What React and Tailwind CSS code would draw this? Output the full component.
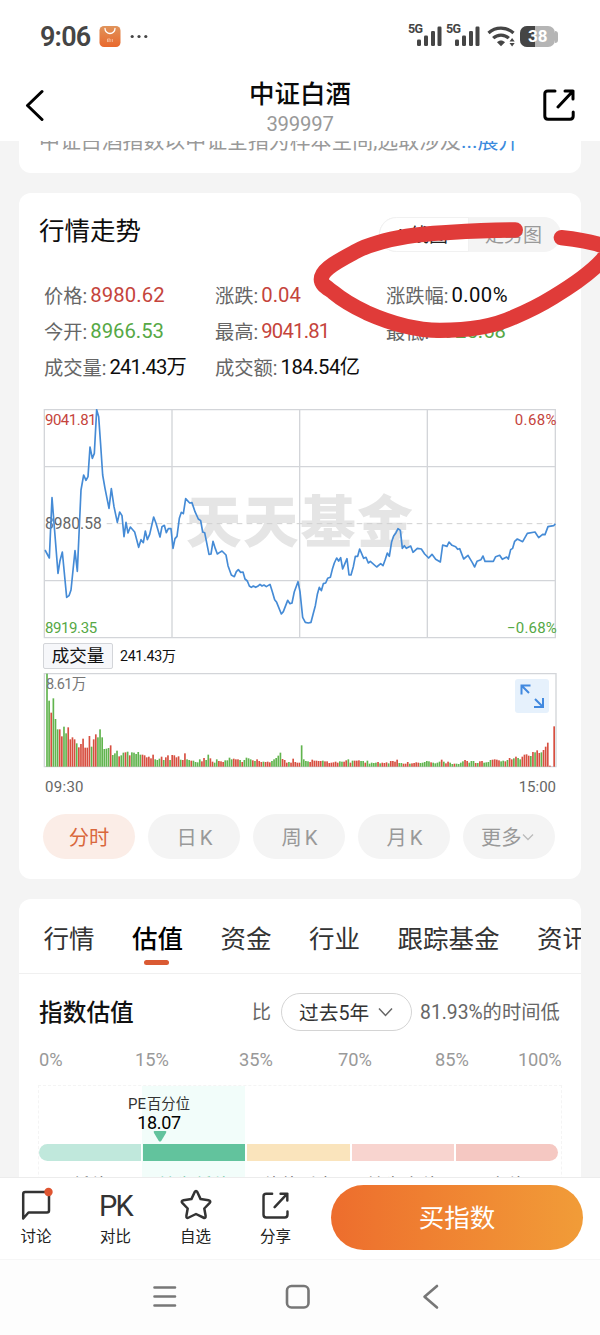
import React from 'react';

const VOLUME =
  'g279 g198 r162 g205 g143 g112 r112 r91 g120 g100 r118 r82 r88 r82 g70 r58 r68 r84 r57 r57 r92 g60 r82 r97 g88 g112 g88 g53 g54 g56 r64 g35 g40 g48 r31 g34 g42 r43 g45 r34 g43 g42 g38 g44 g36 r36 r34 r28 r30 r25 r36 g22 g20 g24 r30 g20 r28 r34 g20 r35 r34 r28 r31 g21 r20 r40 g22 g20 r18 g18 g14 g13 g22 r16 r26 g20 g36 r25 r15 g12 g22 r17 r16 r14 g19 g19 g27 g22 r24 r22 r22 g20 r14 g20 g27 g25 g22 r19 g17 r22 r17 r14 g15 r14 r15 r13 g17 g22 g26 g33 g42 r23 r20 r12 g14 r12 r24 r14 r12 r12 g64 g22 g17 g16 r14 r21 r18 r18 r17 r17 g18 r16 r16 r11 r12 r13 r15 r12 g16 g15 r15 r19 g22 r12 g18 r18 r18 r19 g17 g17 r12 g18 g9 g12 g11 g12 r14 g10 r12 r11 r13 g10 r17 r17 r15 r21 g11 g11 r9 r9 r14 g9 r10 r11 r13 r12 g11 g12 g14 g17 g16 r13 g12 g10 g12 g15 r21 g15 r10 r15 g12 g8 r9 g9 g8 g12 g16 r20 r17 g12 g17 g17 r11 g11 r16 r17 g12 g13 g14 g20 r21 r22 r21 r19 g16 g18 r16 g20 r26 r22 g25 r30 g26 g22 r30 r36 r37 r33 g32 r44 g43 r49 r41 g43 r50 r60 r72 r3 r0 r121'.split(
    ' '
  );

const PRICE =
  '45,465 58,489 66,308 84,535 90,497 97,471 110,607 117,602 123,585 135,467 142,529 153,285 161,240 168,256 174,245 180,156 187,190 193,175 200,44 206,65 212,150 218,240 225,280 237,340 244,281 252,335 262,382 269,351 276,362 282,425 288,382 294,414 301,396 314,411 326,457 333,434 340,443 346,408 352,434 359,418 371,366 378,385 390,426 396,395 403,391 409,413 415,401 423,401 429,460 435,431 441,424 448,370 454,352 460,356 467,311 479,324 486,323 495,350 505,372 512,377 518,411 524,413 537,478 543,477 549,439 556,461 562,477 568,473 576,468 588,480 594,512 604,540 613,545 619,530 625,524 632,532 639,531 645,552 652,558 658,573 664,577 670,573 677,577 683,574 690,568 696,573 702,570 709,575 720,568 727,590 734,614 740,622 754,657 760,650 773,616 780,626 786,624 793,590 804,560 810,590 818,667 826,682 835,684 843,682 850,655 856,632 862,598 868,577 874,587 880,566 887,564 893,550 901,547 907,523 913,504 920,489 926,498 932,488 938,522 945,505 951,491 957,540 963,540 970,515 976,484 983,484 989,462 1001,490 1008,487 1015,504 1021,499 1040,516 1052,506 1059,512 1066,493 1072,474 1078,484 1085,440 1091,423 1098,413 1104,401 1111,406 1117,460 1123,452 1129,460 1142,453 1149,472 1162,460 1174,462 1184,477 1196,489 1206,478 1217,493 1231,501 1238,450 1251,454 1257,441 1266,451 1277,455 1283,463 1289,461 1301,492 1314,481 1327,503 1334,516 1341,499 1353,494 1359,483 1365,499 1390,499 1397,485 1409,481 1417,493 1430,486 1435,492 1442,464 1448,460 1454,439 1462,432 1478,440 1492,415 1515,411 1526,428 1538,418 1545,419 1554,395 1571,392 1576,386';

function Signal() {
  return (
    <div className="flex h-[24px] w-[38px] items-start">
      <span className="w-[9px] whitespace-nowrap text-[12.5px] font-bold leading-[11px] tracking-[-0.6px]">5G</span>
      <svg className="h-[24px] w-[25px] shrink-0" viewBox="0 0 25 24" fill="#454545">
        <rect x="0" y="16.500" width="4" height="6.500" rx="1.200" />
        <rect x="7" y="12.500" width="4" height="10.500" rx="1.200" />
        <rect x="14" y="8" width="4" height="15" rx="1.200" />
        <rect x="20.500" y="3.500" width="4" height="19.500" rx="1.200" />
      </svg>
    </div>
  );
}

function StatusBar() {
  return (
    <div className="flex h-[72px] items-start pl-[40px] pr-[42px] text-[#454545]">
      <div className="mt-[23px] text-[27px] font-semibold leading-[28px] tracking-[-0.8px]">9:06</div>
      <svg className="ml-[9px] mt-[25px] h-[23px] w-[22px]" viewBox="0 0 22 23">
        <defs>
          <linearGradient id="bag" x1="0" y1="0" x2="0" y2="1">
            <stop offset="0" stopColor="#e0935a" />
            <stop offset="1" stopColor="#e9682c" />
          </linearGradient>
        </defs>
        <rect x="0.5" y="1" width="21" height="21" rx="4.5" fill="url(#bag)" />
        <path d="M6 3.5a5 5 0 0 0 10 0" fill="none" stroke="#fff" strokeWidth="1.3" strokeLinecap="round" />
        <path d="M8.5 17v-3h2.6v3M9.8 15.2V17M13.3 14v3" fill="none" stroke="#f8c9ad" strokeWidth="0.8" />
      </svg>
      <svg className="ml-[9px] mt-[34px] h-[5px] w-[18px]" viewBox="0 0 18 5" fill="#454545">
        <circle cx="2.2" cy="2.5" r="1.6" />
        <circle cx="9" cy="2.5" r="1.6" />
        <circle cx="15.8" cy="2.5" r="1.6" />
      </svg>
      <div className="ml-auto flex items-start">
        <div className="mt-[23px] flex">
          <Signal />
          <Signal />
        </div>
        <svg className="ml-[3px] mt-[25px] h-[23px] w-[29px]" viewBox="0 0 29 23" fill="none" stroke="#454545" strokeWidth="3.2">
          <path d="M1.500 8C8.500 1.500 19.500 1.500 26.500 8" />
          <path d="M6.200 13.200C10.500 9 17.500 9 21.800 13.200" />
          <path d="M10 17.200c2.500-2.400 5.500-2.400 8 0l-4 4z" fill="#454545" stroke="none" />
          <path d="M22.500 16.500l2.600-3.400 2.600 3.400zM22.500 18l2.600 3.400 2.600-3.400z" fill="#454545" stroke="none" />
        </svg>
        <div className="relative ml-[4px] mt-[26px] flex h-[21px] w-[38px] items-center">
          <div className="h-[21px] w-[35px] overflow-hidden rounded-[7px] bg-[#b5b5b5]">
            <div className="h-full w-[15px] bg-[#454545]" />
          </div>
          <div className="h-[12px] w-[3px] rounded-r-full bg-[#b5b5b5]" />
          <span className="absolute left-[8px] top-0 text-[17px] font-bold leading-[21px] text-white">38</span>
        </div>
      </div>
    </div>
  );
}

function ShareIcon({ className, color, width }) {
  return (
    <svg className={className} viewBox="0 0 32 32" fill="none" stroke={color} strokeWidth={width} strokeLinecap="round" strokeLinejoin="round">
      <path d="M12 2H5Q1.800 2 1.800 5V27Q1.800 30.200 5 30.200H27Q30.200 30.200 30.200 27V23" />
      <path d="M15 18L30 2M22 2H30V10" />
    </svg>
  );
}

function Header() {
  return (
    <div className="flex h-[69px] items-start">
      <svg className="ml-[25px] mt-[17px] h-[32px] w-[20px]" viewBox="0 0 20 32" fill="none" stroke="#000" strokeWidth="3" strokeLinecap="round" strokeLinejoin="round">
        <path d="M17 2.500L2.500 16.500L17 30.500" />
      </svg>
      <div className="flex flex-1 flex-col items-center pl-[12px]">
        <div className="mt-[6px] text-[25.5px] font-medium leading-[32px] text-[#0a0a0a]">中证白酒</div>
        <div className="mt-[3px] text-[20.3px] leading-[22px] tracking-[-0.2px] text-[#999]">399997</div>
      </div>
      <ShareIcon className="mr-[25px] mt-[17px] h-[32px] w-[32px]" color="#000" width="3" />
    </div>
  );
}

const STATS = [
  ['价格', '8980.62', 'tracking-[0.1px] text-[#c5443c]'],
  ['涨跌', '0.04', 'text-[#c5443c]'],
  ['涨跌幅', '0.00%', 'tracking-[0.4px] text-[#0d0d0d]'],
  ['今开', '8966.53', 'text-[#56a845]'],
  ['最高', '9041.81', 'tracking-[-0.8px] text-[#c5443c]'],
  ['最低', '8925.68', 'text-[#56a845]'],
  ['成交量', '241.43万', 'tracking-[-0.9px] text-[#0d0d0d]'],
  ['成交额', '184.54亿', 'tracking-[-0.5px] text-[#0d0d0d]'],
];

function PriceChart() {
  return (
    <div className="relative ml-[24px] mt-[24px] h-[230px] w-[514px]">
      <svg className="absolute inset-0 h-[230px] w-[514px]" viewBox="39 42 1542 690" fill="none" stroke="#d3d5d9" strokeWidth="4">
        <path d="M43 44H1576V728H43ZM43 215H1576M43 557H1576M426 44V728M809 44V728M1192 44V728" />
      </svg>
      <div className="absolute left-[143px] top-[84px] whitespace-nowrap text-[55.5px] font-black leading-[62px] tracking-[1.6px] text-[#e5e5e5]">天天基金</div>
      <svg className="absolute inset-0 h-[230px] w-[514px]" viewBox="39 42 1542 690" fill="none">
        <path d="M230 386H1576" stroke="#d0d0d0" strokeWidth="3" strokeDasharray="17 13" />
      </svg>
      <span className="absolute left-[2px] top-[2px] text-[15px] leading-[18px] tracking-[-0.5px] text-[#c5443c]">9041.81</span>
      <span className="absolute left-[2px] top-[106px] text-[15.6px] leading-[18px] text-[#666]">8980.58</span>
      <span className="absolute left-[2px] top-[210px] text-[15px] leading-[18px] tracking-[-0.4px] text-[#56a845]">8919.35</span>
      <span className="absolute right-0 top-[2px] text-[15px] leading-[18px] tracking-[0.4px] text-[#c5443c]">0.68%</span>
      <span className="absolute right-0 top-[210px] text-[15px] leading-[18px] tracking-[0.2px] text-[#56a845]">−0.68%</span>
      <svg className="absolute inset-0 h-[230px] w-[514px]" viewBox="39 42 1542 690" fill="none">
        <polyline points={PRICE} stroke="#458bd6" strokeWidth="5" strokeLinejoin="round" />
      </svg>
    </div>
  );
}

function VolumeChart() {
  return (
    <div className="relative ml-[24px] mt-[3px] h-[96px] w-[515px]">
      <svg className="absolute inset-0 h-[96px] w-[515px]" viewBox="39 111 1545 288">
        <path d="M43 116H1578V395H43Z" fill="none" stroke="#d3d5d9" strokeWidth="4" />
        {VOLUME.map((v, i) => {
          const h = Number(v.slice(1));
          return <rect key={i} x={48.5 + i * 6.366} y={395 - h} width="5" height={h} fill={v[0] === 'g' ? '#61b44e' : '#d74f40'} />;
        })}
      </svg>
      <span className="absolute left-[3px] top-[4px] text-[14.5px] leading-[18px] tracking-[-0.6px] text-[#777]">8.61万</span>
      <svg className="absolute left-[472px] top-[7px] h-[34px] w-[34px]" viewBox="0 0 34 34" fill="none" stroke="#4189df" strokeWidth="2">
        <rect width="34" height="34" rx="3" fill="#e6f1fc" stroke="none" />
        <path d="M15.500 6.500H6.500V15.500M6.500 6.500L14 14M28 19V28H19M28 28L20 20" />
      </svg>
    </div>
  );
}

function TrendCard() {
  return (
    <section className="mt-[20px] h-[686px] rounded-[12px] bg-white">
      <div className="flex items-start justify-between pl-[20px] pr-[20px]">
        <h2 className="mt-[20px] text-[25.5px] font-normal leading-[36px] text-[#0d0d0d]">行情走势</h2>
        <div className="mt-[24px] flex h-[35px] w-[182px] rounded-full bg-[#f4f4f4] text-[19px] leading-[38px]">
          <div className="w-[90px] rounded-l-full border border-[#f1f1f1] bg-white pl-[18px] leading-[36px] text-[#222]">K线图</div>
          <div className="pl-[16px] text-[#999]">走势图</div>
        </div>
      </div>
      <div className="ml-[25px] mt-[25px] grid grid-cols-[171px_171px_190px]">
        {STATS.map(([label, value, color]) => (
          <div key={label} className="flex h-[36px] items-center whitespace-nowrap text-[19.3px] leading-[36px] text-[#666]">
            <span className="mt-[3px]">{label}:</span>
            <span className={'ml-[3px] text-[20.3px] ' + color}>{value}</span>
          </div>
        ))}
      </div>
      <PriceChart />
      <div className="ml-[24px] mt-[3px] flex h-[27px] items-center">
        <div className="h-[26px] w-[70px] rounded-[2px] border border-[#d3d5d9] bg-[#f6f7fa] text-center text-[17.5px] leading-[24px] text-[#111]">成交量</div>
        <div className="ml-[7px] text-[14.2px] leading-[24px] tracking-[-0.3px] text-[#111]">241.43万</div>
      </div>
      <VolumeChart />
      <div className="ml-[26px] mr-[25px] mt-[9px] flex justify-between text-[15px] leading-[20px] text-[#666]">
        <span className="tracking-[0.3px]">09:30</span>
        <span>15:00</span>
      </div>
      <div className="ml-[24px] mt-[17px] flex gap-[13px] text-[20.3px] leading-[48px] text-[#999]">
        <div className="h-[45px] w-[92px] rounded-full bg-[#fbede7] text-center text-[#d9673c]">分时</div>
        {['日', '周', '月'].map((t) => (
          <div key={t} className="h-[45px] w-[92px] rounded-full bg-[#f4f4f4] pl-px text-center">
            {t}
            <span className="ml-[3px]">K</span>
          </div>
        ))}
        <div className="flex h-[45px] w-[92px] items-center rounded-full bg-[#f4f4f4] pl-[18px]">
          <span className="pt-[2px]">更多</span>
          <svg className="h-[8px] w-[12px]" viewBox="0 0 12 8" fill="none" stroke="#bbb" strokeWidth="1.3">
            <path d="M1 1.500L6 6.500L11 1.500" />
          </svg>
        </div>
      </div>
    </section>
  );
}

const BANDS = [
  ['低估', 'rounded-l-full bg-[#c0e8dc]', 'text-[#555]'],
  ['较为低估', 'bg-[#62c39d]', 'text-[#62c39d]'],
  ['估值适中', 'bg-[#fae4bc]', 'text-[#555]'],
  ['较为高估', 'bg-[#f8d4cf]', 'text-[#555]'],
  ['高估', 'rounded-r-full bg-[#f5c8c2]', 'text-[#555]'],
];

function ValuationCard() {
  return (
    <section className="mt-[20px] h-[278px] overflow-hidden rounded-t-[12px] bg-white">
      <div className="flex h-[75px] gap-[37.500px] whitespace-nowrap border-b border-[#f0f0f0] pl-[24.500px] text-[25.500px] leading-[80px] text-[#333]">
        <div>行情</div>
        <div className="relative font-medium text-black">
          估值
          <div className="absolute bottom-[8px] left-[12px] h-[5px] w-[25px] rounded-full bg-[#da5a33]" />
        </div>
        <div>资金</div>
        <div>行业</div>
        <div>跟踪基金</div>
        <div>资讯</div>
      </div>
      <div className="mt-[18px] flex h-[40px] items-center whitespace-nowrap pl-[20px] text-[19.300px] text-[#666]">
        <h3 className="pt-[3px] text-[23.700px] font-medium text-[#111]">指数估值</h3>
        <span className="ml-[118px] pt-[3px]">比</span>
        <div className="ml-[10px] flex h-[38px] w-[131px] items-center rounded-full border border-[#d4d4d4] pl-[17px] text-[19.700px] text-[#333]">
          <span className="pt-[3px]">过去5年</span>
          <svg className="ml-[9px] h-[10px] w-[15px]" viewBox="0 0 15 10" fill="none" stroke="#666" strokeWidth="1.5">
            <path d="M1 1.500L7.500 8.500L14 1.500" />
          </svg>
        </div>
        <span className="ml-[8px] pt-[3px]">81.93%的时间低</span>
      </div>
      <div className="grid h-[53px] grid-cols-[96px_104px_99px_97px_83px_64px] pl-[20px] text-[18.300px] leading-[56px] text-[#999]">
        <span>0%</span>
        <span>15%</span>
        <span>35%</span>
        <span>70%</span>
        <span>85%</span>
        <span className="tracking-[-0.2px]">100%</span>
      </div>
      <div className="relative ml-[19px] h-[110px] w-[524px] border border-dashed border-[#f4f4f4]">
        <div className="absolute left-[103px] top-0 h-full w-[103px] bg-[#f2fdfa]" />
        <div className="absolute left-[78px] top-[8px] flex w-[84px] flex-col items-center text-[#333]">
          <div className="whitespace-nowrap text-[14.300px] leading-[20px]">
            <span className="mr-[1px] text-[15px]">PE</span>百分位
          </div>
          <div className="text-[18px] leading-[18px] tracking-[-0.3px] text-[#000]">18.07</div>
          <svg className="-mt-px ml-[2px] h-[11px] w-[14px]" viewBox="0 0 14 11" fill="#62c39d">
            <path d="M1.500 0H12.500Q14 0 13 2L8.200 10Q7 11 5.800 10L1 2Q0 0 1.500 0Z" />
          </svg>
        </div>
        <div className="relative mt-[58px] grid w-[519px] grid-cols-5 gap-[2px]">
          {BANDS.map(([t, bar, color]) => (
            <div key={t}>
              <div className={'h-[17px] ' + bar} />
              <div className={'mt-[12px] text-center text-[18px] leading-[26px] ' + color}>{t}</div>
            </div>
          ))}
        </div>
      </div>
    </section>
  );
}

function BottomBar() {
  return (
    <div className="relative flex h-[82px] items-start border-t border-[#ececec] bg-white text-center text-[15.500px] leading-[18px] text-[#222]">
      <div className="grid w-[331px] grid-cols-[76px_79px_81px_79px]">
        <div className="flex flex-col items-center pr-[4px]">
          <svg className="mt-[9px] h-[36px] w-[36px]" viewBox="0 0 36 36" fill="none" stroke="#333" strokeWidth="2.500" strokeLinejoin="round">
            <path d="M5.200 31.500V7Q5.200 5 7.200 5H29Q31 5 31 7V23.500Q31 25.500 29 25.500H10.500Z" />
            <circle cx="30.500" cy="5" r="4.200" fill="#df5531" stroke="none" />
          </svg>
          <span className="mt-[5px]">讨论</span>
        </div>
        <div className="flex flex-col items-center">
          <span className="mt-[12px] h-[33px] text-[29px] leading-[33px] tracking-[-1.8px] text-[#333]">PK</span>
          <span className="mt-[5px]">对比</span>
        </div>
        <div className="flex flex-col items-center">
          <svg className="mt-[9px] h-[36px] w-[36px]" viewBox="0 0 36 36" fill="none" stroke="#333" strokeWidth="2.500" strokeLinejoin="round">
            <path d="M16.600 5.200Q18 2.600 19.400 5.200L22.600 12.100L30.500 13.300Q33.500 13.900 31.500 16.100L26.300 21.500L27.600 28.800Q27.900 31.800 25.200 30.500L18 27L10.800 30.500Q8.100 31.800 8.400 28.800L9.700 21.500L4.500 16.100Q2.500 13.900 5.500 13.300L13.400 12.100Z" />
          </svg>
          <span className="mt-[5px]">自选</span>
        </div>
        <div className="flex flex-col items-center">
          <ShareIcon className="mb-[9px] mt-[14px] h-[27px] w-[27px]" color="#333" width="2.900" />
          <span>分享</span>
        </div>
      </div>
      <div className="mt-[7px] h-[65px] w-[252px] rounded-full bg-linear-to-r from-[#ed6d2d] to-[#f19c38] text-[25.500px] leading-[67px] text-white">买指数</div>
    </div>
  );
}

export default function App() {
  return (
    <div className="relative flex h-[1335px] w-[600px] flex-col overflow-hidden bg-[#f4f4f4] font-[Roboto,'Noto_Sans_CJK_SC',sans-serif]">
      <header className="h-[141px] shrink-0 bg-white">
        <StatusBar />
        <Header />
      </header>
      <main className="h-[1036px] shrink-0 overflow-hidden px-[19px]">
        <section className="h-[32px] overflow-hidden rounded-b-[12px] bg-white">
          <p className="-mt-[15px] whitespace-nowrap pl-[20px] text-[20.900px] leading-[31px] text-[#999]">
            中证白酒指数以中证全指为样本空间,选取涉及<span className="text-[#3b8add]">...展开</span>
          </p>
        </section>
        <TrendCard />
        <ValuationCard />
      </main>
      <BottomBar />
      <nav className="flex h-[76px] shrink-0 items-start border-t border-[#f6f6f6] bg-[#fdfdfd] pt-[23px]">
        <svg className="ml-[152px] h-[28px] w-[26px]" viewBox="0 0 26 28" stroke="#777" strokeWidth="2.600" strokeLinecap="round">
          <path d="M2.500 4.500H23M2.500 13.500H23M2.500 22.500H23" />
        </svg>
        <svg className="ml-[106px] h-[28px] w-[28px]" viewBox="0 0 28 28" fill="none" stroke="#777" strokeWidth="2.600">
          <rect x="3" y="3" width="21.500" height="21.500" rx="4.500" />
        </svg>
        <svg className="ml-[109px] h-[28px] w-[20px]" viewBox="0 0 20 28" fill="none" stroke="#777" strokeWidth="2.600" strokeLinecap="round" strokeLinejoin="round">
          <path d="M16 3L3.500 13.700L16 24.500" />
        </svg>
      </nav>
      <svg className="pointer-events-none absolute left-[300px] top-[190px] h-[200px] w-[300px]" viewBox="0 0 900 600" fill="none" stroke="#e03b39" strokeWidth="46" strokeLinecap="round" strokeLinejoin="round">
        <path d="M646 120C570 120 510 123 450 127C400 130 360 132 320 139C260 149 210 162 170 183C140 199 110 214 86 233C70 246 64 256 64 268C64 284 80 292 100 307C125 328 160 349 200 368C270 399 340 421 420 421C500 421 580 410 640 382C690 361 720 346 760 321C820 285 870 251 908 209L930 176C890 157 840 149 784 143" />
      </svg>
    </div>
  );
}
